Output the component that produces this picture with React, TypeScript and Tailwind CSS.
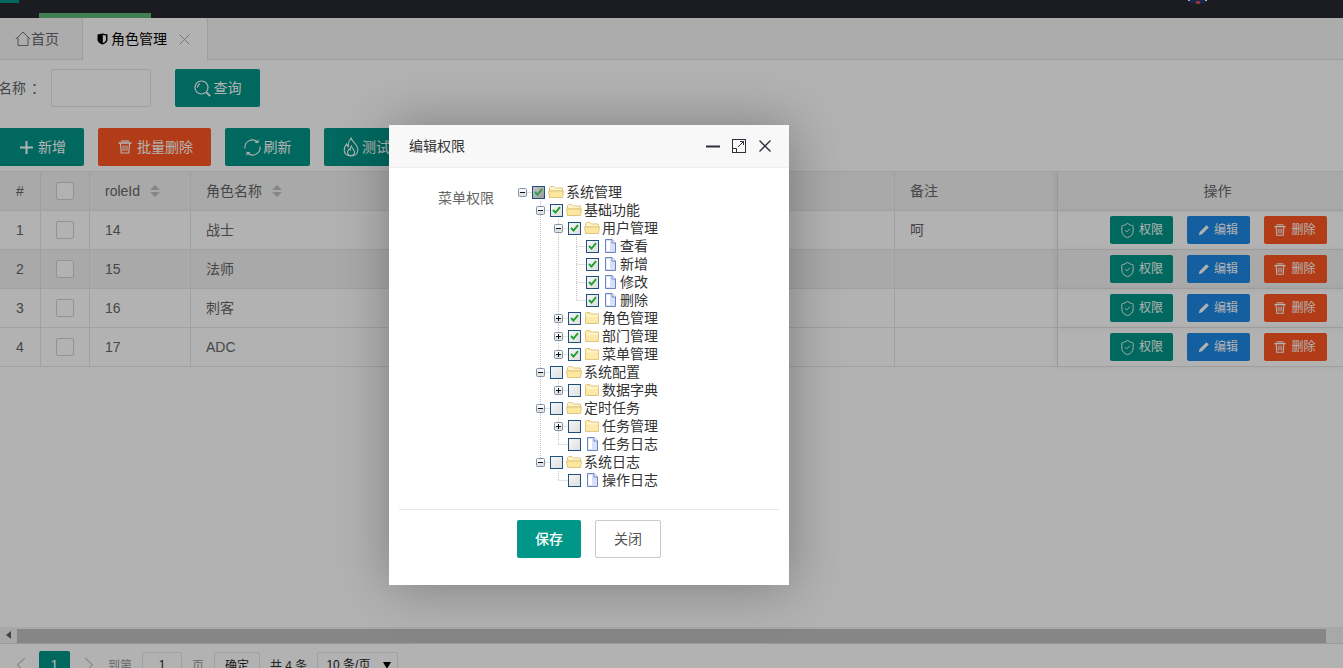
import { ShieldCheck } from "lucide-react";

type TreeNode = {
  name: string;
  on?: boolean;
  part?: boolean;
  closed?: boolean;
  children?: TreeNode[];
};

type FlatRow = {
  node: TreeNode;
  level: number;
  isLast: boolean;
  guides: boolean[];
};

const menuTree: TreeNode[] = [
  {
    name: "系统管理",
    on: true,
    part: true,
    children: [
      {
        name: "基础功能",
        on: true,
        children: [
          {
            name: "用户管理",
            on: true,
            children: [
              { name: "查看", on: true },
              { name: "新增", on: true },
              { name: "修改", on: true },
              { name: "删除", on: true },
            ],
          },
          { name: "角色管理", on: true, closed: true },
          { name: "部门管理", on: true, closed: true },
          { name: "菜单管理", on: true, closed: true },
        ],
      },
      {
        name: "系统配置",
        children: [{ name: "数据字典", closed: true }],
      },
      {
        name: "定时任务",
        children: [{ name: "任务管理", closed: true }, { name: "任务日志" }],
      },
      {
        name: "系统日志",
        children: [{ name: "操作日志" }],
      },
    ],
  },
];

const flatten = (nodes: TreeNode[], level = 0, guides: boolean[] = []): FlatRow[] =>
  nodes.flatMap((node, i) => {
    const isLast = i === nodes.length - 1;
    const row: FlatRow = { node, level, isLast, guides };
    return [row, ...flatten(node.children ?? [], level + 1, [...guides, !isLast && level > 0])];
  });

const roles = [
  { id: 14, name: "战士", remark: "呵" },
  { id: 15, name: "法师", remark: "", hover: true },
  { id: 16, name: "刺客", remark: "" },
  { id: 17, name: "ADC", remark: "" },
];

const dots = { stroke: "#c4c4c4", strokeDasharray: "1 1" };

// tree guide cell, dotted lines plus the +/- box
const GuideCell = ({ row }: { row: FlatRow }) => {
  const { node, level, isLast } = row;
  const hasSwitch = !!node.children || node.closed;
  return (
    <svg width="18" height="18" viewBox="0 0 18 18" className="shrink-0">
      {level > 0 && <line x1="8.5" y1="0" x2="8.5" y2={isLast ? 9 : 18} {...dots} />}
      <line x1="8.5" y1="9.5" x2="18" y2="9.5" {...dots} />
      {hasSwitch && (
        <>
          <rect x="4.5" y="5.5" width="8" height="8" rx="1" fill="#e2e2e2" stroke="#7f93ab" />
          <rect x="5" y="6" width="7" height="3" fill="#f8f8f8" />
          <line x1="6" y1="9.5" x2="11" y2="9.5" stroke="#111" />
          {node.closed && <line x1="8.5" y1="7" x2="8.5" y2="12" stroke="#111" />}
        </>
      )}
    </svg>
  );
};

const TreeCheck = ({ on, part }: { on?: boolean; part?: boolean }) => (
  <div
    className={`w-[13px] h-[13px] shrink-0 border border-[#1c5180] flex items-center justify-center bg-linear-to-br ${
      part ? "from-[#c4c4c4] to-[#9a9a9a]" : "from-[#f6f6f6] to-[#dedede]"
    }`}
  >
    {on && (
      <svg width="9" height="8" viewBox="0 0 9 8">
        <path d="M1 4 L3.5 6.5 L8 1.2" fill="none" stroke={part ? "#2f9a4a" : "#1fa02c"} strokeWidth="1.9" />
      </svg>
    )}
  </div>
);

const FolderIcon = ({ open }: { open: boolean }) => (
  <svg width="16" height="14" viewBox="0 0 16 14" className="shrink-0">
    {open ? (
      <>
        <path d="M1.5 12.5 V2.5 L2.5 1.5 H6 L7.5 3 H14.5 V6 H1.5 Z" fill="#fff3c8" stroke="#e0c680" />
        <path d="M0.5 6 H15.5 L14.5 12.5 H1.5 Z" fill="#fde79f" stroke="#e0c680" />
      </>
    ) : (
      <>
        <path d="M1.5 12.5 V2.5 L2.5 1.5 H6 L7.5 3 H14.5 V12.5 Z" fill="#fdeaa8" stroke="#e0c680" />
        <rect x="2.5" y="4" width="11" height="1.5" fill="#fff7d6" />
      </>
    )}
  </svg>
);

const LeafIcon = () => (
  <svg width="13" height="14" viewBox="0 0 13 14" className="shrink-0">
    <path d="M1.5 0.5 H8 L11.5 4 V13.5 H1.5 Z" fill="#d6e0f8" stroke="#6f83bf" />
    <path d="M8 0.5 V4 H11.5" fill="#fff" stroke="#6f83bf" />
    <rect x="2.5" y="2" width="3.5" height="10" fill="#fff" />
  </svg>
);

const MenuTree = () => (
  <div className="text-sm text-[#333] leading-[18px]">
    {flatten(menuTree).map((row) => {
      const isFolder = !!row.node.children || row.node.closed;
      return (
        <div key={row.node.name} className="flex items-center h-[18px]">
          {row.guides.map((on, i) => (
            <svg key={i} width="18" height="18" viewBox="0 0 18 18" className="shrink-0">
              {on && <line x1="8.5" y1="0" x2="8.5" y2="18" {...dots} />}
            </svg>
          ))}
          <GuideCell row={row} />
          <TreeCheck on={row.node.on} part={row.node.part} />
          {isFolder ? (
            <div className="ml-[3px] mr-[2px]">
              <FolderIcon open={!!row.node.children} />
            </div>
          ) : (
            <div className="ml-[5px] mr-[3px]">
              <LeafIcon />
            </div>
          )}
          <span>{row.node.name}</span>
        </div>
      );
    })}
  </div>
);

const TrashIcon = ({ size = 14 }: { size?: number }) => (
  <svg width={size} height={size} viewBox="0 0 14 14" fill="none" stroke="currentColor" className="shrink-0">
    <path d="M0.5 3 H13.5" strokeWidth="1.6" />
    <path d="M3 1 H11" strokeWidth="1.2" />
    <path d="M2.5 3.5 L3.2 13 H10.8 L11.5 3.5" strokeWidth="1.2" />
    <path d="M5 5.5 V11 M7 5.5 V11 M9 5.5 V11" strokeWidth="1" />
  </svg>
);

const PenIcon = () => (
  <svg width="12" height="12" viewBox="0 0 12 12" fill="currentColor">
    <path d="M8.5 1.2 L10.8 3.5 L4 10.3 L0.8 11.2 L1.7 8 Z" />
  </svg>
);

const SearchIcon = () => (
  <svg width="17" height="17" viewBox="0 0 17 17" fill="none" stroke="currentColor" strokeWidth="1.2">
    <circle cx="7.5" cy="7.5" r="6.5" />
    <path d="M12.5 12.5 L16.2 16.2" strokeWidth="1.8" />
    <path d="M3.5 7.5 A4 4 0 0 1 6 3.8" />
  </svg>
);

const RefreshIcon = () => (
  <svg width="17" height="17" viewBox="0 0 17 17" fill="none" stroke="currentColor" strokeWidth="1.1">
    <path d="M1 9.5 A7.5 7.5 0 0 1 13.5 3" />
    <path d="M16 7.5 A7.5 7.5 0 0 1 3.5 14" />
    <path d="M14.3 0.8 L13.8 3.6 L11 3.2" />
    <path d="M2.7 16.2 L3.2 13.4 L6 13.8" />
  </svg>
);

const FlameIcon = () => (
  <svg width="16" height="20" viewBox="0 0 16 20" fill="none" stroke="currentColor" strokeWidth="1.1">
    <path d="M8 1 C9 5 14.8 7 14.8 13 C14.8 16.6 12 19 8 19 C4 19 1.2 16.6 1.2 13 C1.2 10 2.5 8.5 3.6 7 C4 8.5 4.6 9.4 5.5 9.8 C5 6.5 6 3.5 8 1 Z" />
    <path d="M8.5 9 C9 11.5 11.5 12.5 11.5 15 C11.5 17 10 18.5 8 18.5 C6 18.5 4.6 17 4.6 15.2 C4.6 13.5 5.6 12.7 6.2 12 C6.6 12.5 7 12.8 7.4 12.9 C7.2 11.5 7.6 10 8.5 9 Z" />
  </svg>
);

const HomeIcon = () => (
  <svg width="16" height="16" viewBox="0 0 16 16" fill="none" stroke="#777">
    <path d="M0.8 8.2 L8 1 L15.2 8.2" />
    <path d="M3 6.5 V14.5 H13 V6.5" />
  </svg>
);

const ShieldIcon = () => (
  <svg width="11" height="12" viewBox="0 0 11 12">
    <path d="M0.5 1.5 L5.5 0.5 L10.5 1.5 V6.5 C10.5 9 8 11 5.5 11.5 C3 11 0.5 9 0.5 6.5 Z" fill="#000" />
    <path d="M5.8 2 L9 2.6 V6.4 C9 8 7.5 9.4 5.8 9.9 Z" fill="#fff" />
  </svg>
);

const SortIcon = () => (
  <svg width="10" height="12" viewBox="0 0 10 12" fill="#c2c2c2" className="ml-[5px]">
    <path d="M5 0 L10 5 H0 Z" />
    <path d="M5 12 L10 7 H0 Z" />
  </svg>
);

const Checkbox = () => (
  <div className="w-[18px] h-[18px] mx-auto border border-[#d2d2d2] rounded-[2px] bg-white" />
);

const RowButton = ({ color, children }: { color: string; children: React.ReactNode }) => (
  <button className={`w-[63px] h-[28px] rounded-[2px] text-xs text-white flex items-center justify-center gap-[3px] ${color}`}>
    {children}
  </button>
);

const ToolButton = ({
  color,
  width,
  children,
}: {
  color: string;
  width: string;
  children: React.ReactNode;
}) => (
  <button className={`h-[38px] rounded-[2px] text-sm text-white flex items-center justify-center shrink-0 ${color} ${width}`}>
    {children}
  </button>
);

const cellBorder = "border-b border-r border-[#e6e6e6]";

export default function App() {
  return (
    <div className="relative w-[1343px] h-[668px] overflow-hidden bg-white text-[#666] text-sm [font-family:'Liberation_Sans','Noto_Sans_CJK_SC',sans-serif]">
      {/* top bar, scrolled almost out of view */}
      <div className="h-[18px] bg-[#262932] flex">
        <div className="w-[19px] h-[3px] bg-[#009688]" />
        <div className="w-[112px] h-[5px] ml-[20px] self-end bg-[#5fb878]" />
        <svg width="22" height="4" viewBox="0 0 22 4" className="ml-[1036px]">
          <path d="M0 0 H21 C19 2.5 15 4 10.5 4 C6 4 2 2.5 0 0 Z" fill="#27386b" />
          <rect x="9" y="1" width="4" height="3" fill="#c9504c" />
          <rect x="1" y="0" width="2" height="1" fill="#fff" />
          <rect x="18" y="0" width="2" height="1" fill="#fff" />
        </svg>
      </div>

      {/* tabs */}
      <div className="h-[42px] flex bg-[#f6f6f6] border-b border-[#e2e2e2]">
        <div className="w-[83px] pl-[15px] flex items-center border-r border-[#e2e2e2] shrink-0">
          <HomeIcon />
          <span>首页</span>
        </div>
        <div className="w-[125px] h-[42px] pl-[14px] flex items-center bg-white border-r border-[#e2e2e2] text-black shrink-0">
          <ShieldIcon />
          <span className="ml-[3px]">角色管理</span>
          <svg width="11" height="11" viewBox="0 0 11 11" stroke="#aaa" className="ml-[12px]">
            <path d="M0.5 0.5 L10.5 10.5 M10.5 0.5 L0.5 10.5" />
          </svg>
        </div>
      </div>

      {/* search form */}
      <div className="mt-[9px] h-[38px] ml-[-2px] flex items-center">
        <span className="w-[53px] shrink-0">
          名称<span className="ml-[5px]">：</span>
        </span>
        <div className="w-[100px] h-[38px] border border-[#e6e6e6] rounded-[2px]" />
        <div className="ml-[24px]">
          <ToolButton color="bg-[#009688]" width="w-[85px] gap-[3px]">
            <SearchIcon />
            <span>查询</span>
          </ToolButton>
        </div>
      </div>

      {/* toolbar */}
      <div className="mt-[21px] ml-[-1px] flex gap-[14px]">
        <ToolButton color="bg-[#009688]" width="w-[85px] pl-[3px] gap-[5px]">
          <svg width="13" height="13" viewBox="0 0 13 13" fill="currentColor">
            <path d="M5.5 0 H7.5 V5.5 H13 V7.5 H7.5 V13 H5.5 V7.5 H0 V5.5 H5.5 Z" />
          </svg>
          <span>新增</span>
        </ToolButton>
        <ToolButton color="bg-[#ff5722]" width="w-[113px] pl-[2px] gap-[5px]">
          <TrashIcon />
          <span>批量删除</span>
        </ToolButton>
        <ToolButton color="bg-[#009688]" width="w-[85px] gap-[3px]">
          <RefreshIcon />
          <span>刷新</span>
        </ToolButton>
        <ToolButton color="bg-[#009688]" width="w-[85px] gap-[3px]">
          <FlameIcon />
          <span>测试</span>
        </ToolButton>
      </div>

      {/* table */}
      <div className="mt-[5px] h-[456px] overflow-hidden">
        <table className="w-[1376px] table-fixed border-separate border-spacing-0 text-left">
          <colgroup>
            <col className="w-[41px]" />
            <col className="w-[49px]" />
            <col className="w-[101px]" />
            <col className="w-[704px]" />
            <col className="w-[163px]" />
            <col className="w-[318px]" />
          </colgroup>
          <thead>
            <tr className="bg-[#f2f2f2]">
              <th className={`h-[40px] border-t font-normal text-center ${cellBorder}`}>#</th>
              <th className={`border-t font-normal ${cellBorder}`}>
                <Checkbox />
              </th>
              <th className={`border-t font-normal px-[15px] ${cellBorder}`}>
                <div className="flex items-center">
                  roleId
                  <span className="ml-[5px]">
                    <SortIcon />
                  </span>
                </div>
              </th>
              <th className={`border-t font-normal px-[15px] ${cellBorder}`}>
                <div className="flex items-center">
                  角色名称
                  <span className="ml-[5px]">
                    <SortIcon />
                  </span>
                </div>
              </th>
              <th className={`border-t font-normal px-[15px] ${cellBorder}`}>备注</th>
              <th className={`border-t font-normal text-center pl-[2px] shadow-[-3px_0_6px_rgba(0,0,0,0.06)] ${cellBorder}`}>操作</th>
            </tr>
          </thead>
          <tbody>
            {roles.map((role, i) => (
              <tr key={role.id} className={role.hover ? "bg-[#f2f2f2]" : ""}>
                <td className={`h-[39px] text-center ${cellBorder}`}>{i + 1}</td>
                <td className={cellBorder}>
                  <Checkbox />
                </td>
                <td className={`px-[15px] ${cellBorder}`}>{role.id}</td>
                <td className={`px-[15px] ${cellBorder}`}>{role.name}</td>
                <td className={`px-[15px] ${cellBorder}`}>{role.remark}</td>
                <td className={`shadow-[-3px_0_6px_rgba(0,0,0,0.06)] ${cellBorder}`}>
                  <div className="flex justify-center gap-[14px] ml-[3px]">
                    <RowButton color="bg-[#009688]">
                      <ShieldCheck size={17} strokeWidth={1.3} />
                      <span>权限</span>
                    </RowButton>
                    <RowButton color="bg-[#1e88e5]">
                      <PenIcon />
                      <span className="ml-px">编辑</span>
                    </RowButton>
                    <RowButton color="bg-[#ff5722]">
                      <TrashIcon size={12} />
                      <span className="ml-[2px]">删除</span>
                    </RowButton>
                  </div>
                </td>
              </tr>
            ))}
          </tbody>
        </table>
      </div>

      {/* horizontal scrollbar */}
      <div className="h-[17px] flex bg-[#f1f1f1] border-b border-[#dcdcdc]">
        <div className="w-[17px] flex items-center justify-center">
          <svg width="5" height="8" viewBox="0 0 5 8" fill="#606060">
            <path d="M5 0 V8 L0 4 Z" />
          </svg>
        </div>
        <div className="w-[1309px] h-[14px] mt-[2px] bg-[#c1c1c1]" />
      </div>

      {/* pagination */}
      <div className="mt-[7px] ml-[16px] flex items-start text-xs text-[#666]">
        <svg width="10" height="16" viewBox="0 0 10 16" fill="none" stroke="#c9c9c9" strokeWidth="1.3" className="mt-[6px]">
          <path d="M9 1 L1.5 8 L9 15" />
        </svg>
        <div className="ml-[13px] w-[31px] h-[28px] rounded-[2px] bg-[#009688] text-white text-sm flex items-center justify-center">
          1
        </div>
        <svg width="10" height="16" viewBox="0 0 10 16" fill="none" stroke="#c9c9c9" strokeWidth="1.3" className="ml-[14px] mt-[6px]">
          <path d="M1 1 L8.5 8 L1 15" />
        </svg>
        <span className="ml-[14px] mt-[7px] text-[#999]">到第</span>
        <div className="ml-[10px] mt-px w-[40px] h-[26px] border border-[#e6e6e6] rounded-[2px] text-[#222] text-center leading-[24px]">
          1
        </div>
        <span className="ml-[10px] mt-[7px] text-[#999]">页</span>
        <div className="ml-[10px] mt-px w-[46px] h-[26px] border border-[#e6e6e6] rounded-[2px] text-[#222] text-center leading-[26px]">
          确定
        </div>
        <span className="ml-[10px] mt-[7px] text-[#333]">共 4 条</span>
        <div className="ml-[10px] mt-px w-[81px] h-[26px] border border-[#e6e6e6] rounded-[2px] text-[#222] flex items-center justify-between pl-[8px] pr-[6px]">
          <span>10 条/页</span>
          <svg width="8" height="7" viewBox="0 0 8 7" fill="#000">
            <path d="M0 0 H8 L4 7 Z" />
          </svg>
        </div>
      </div>

      {/* layer shade + dialog */}
      <div className="absolute inset-0 bg-black/30">
        <div className="absolute left-[389px] top-[125px] w-[400px] h-[460px] bg-white shadow-[1px_1px_50px_rgba(0,0,0,0.3)]">
          <div className="h-[43px] pl-[20px] flex items-center bg-[#f8f8f8] border-b border-[#eee] text-[#333]">
            <span>编辑权限</span>
            <svg width="66" height="16" viewBox="0 0 66 16" fill="none" stroke="#2f2f3a" className="ml-auto mr-[18px]">
              <path d="M1 8.5 H15" strokeWidth="2" />
              <rect x="27.5" y="1.5" width="13" height="13" />
              <path d="M27.5 10.5 H31.5 V14.5" fill="#fff" />
              <path d="M33 9 L38.5 3.5 M35 3.5 H38.5 V7" />
              <path d="M54.5 2.5 L65.5 13.5 M65.5 2.5 L54.5 13.5" strokeWidth="1.4" />
            </svg>
          </div>
          <div className="h-[341px] flex pt-[15px]">
            <span className="w-[105px] text-right mt-[5px] shrink-0">菜单权限</span>
            <div className="ml-[20px]">
              <MenuTree />
            </div>
          </div>
          <div className="mx-[10px] border-t border-[#e6e6e6]" />
          <div className="mt-[10px] flex justify-center gap-[14px]">
            <button className="w-[64px] h-[38px] rounded-[2px] bg-[#009688] text-white font-medium">保存</button>
            <button className="w-[66px] h-[38px] rounded-[2px] bg-white border border-[#c9c9c9] text-[#555]">关闭</button>
          </div>
        </div>
      </div>
    </div>
  );
}
